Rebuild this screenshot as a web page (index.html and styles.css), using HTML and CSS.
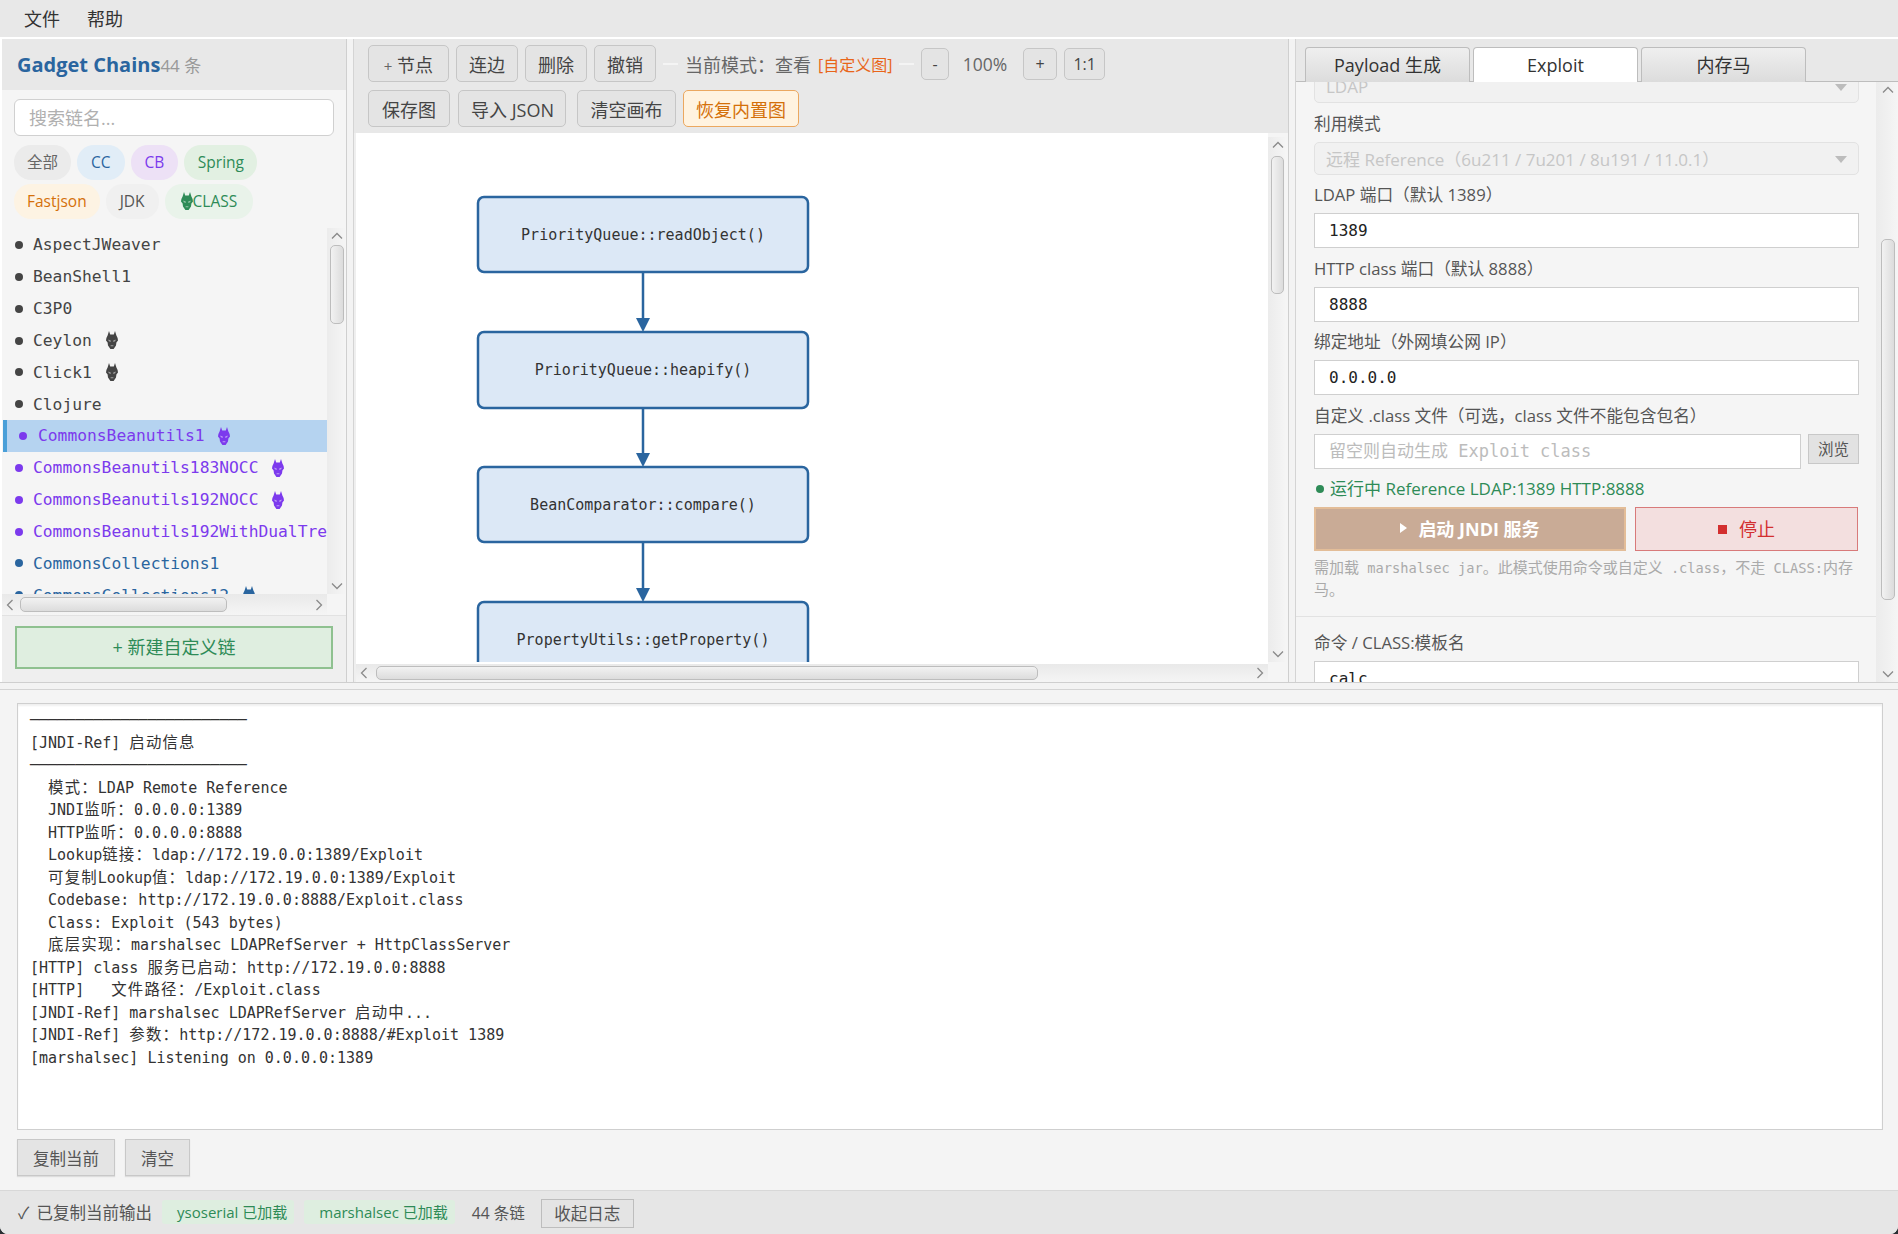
FILE: index.html
```html
<!DOCTYPE html>
<html lang="zh-CN">
<head>
  <meta charset="UTF-8">
  <title>Gadget Chains</title>
  <link rel="stylesheet" href="styles.css">
</head>
<body>
  <svg class="defs" width="0" height="0">
    <symbol id="dragon" viewBox="0 0 12 18">
      <path fill="currentColor" d="M3 0 L4.2 3.6 H7.8 L9 0 L10.4 4.4 L11.6 7 L12 9.5 L10.4 11.6 L10 14.6 L7.6 18 H4.4 L2 14.6 L1.6 11.6 L0 9.5 L0.4 7 L1.6 4.4 Z"/>
      <path fill="#fff" opacity="0.5" d="M2.4 8.4 L5 9.8 L4.4 11 L2.6 10 Z M9.6 8.4 L7 9.8 L7.6 11 L9.4 10 Z M4.6 14.2 H7.4 V15.2 H4.6 Z"/>
    </symbol>
    <symbol id="up" viewBox="0 0 12 8"><path fill="none" stroke="#8a8a8a" stroke-width="1.3" d="M1 6.5 L6 1.5 L11 6.5"/></symbol>
    <symbol id="down" viewBox="0 0 12 8"><path fill="none" stroke="#8a8a8a" stroke-width="1.3" d="M1 1.5 L6 6.5 L11 1.5"/></symbol>
    <symbol id="left" viewBox="0 0 8 12"><path fill="none" stroke="#8a8a8a" stroke-width="1.3" d="M6.5 1 L1.5 6 L6.5 11"/></symbol>
    <symbol id="right" viewBox="0 0 8 12"><path fill="none" stroke="#8a8a8a" stroke-width="1.3" d="M1.5 1 L6.5 6 L1.5 11"/></symbol>
  </svg>

  <div class="app">
    <div class="menubar">
      <span>文件</span>
      <span>帮助</span>
    </div>

    <div class="workspace">
      <!-- 左侧链列表 -->
      <div class="sidebar">
        <div class="side-head">
          <span class="side-title">Gadget Chains</span>
          <span class="side-count">44 条</span>
        </div>
        <div class="side-search">
          <input type="text" placeholder="搜索链名...">
        </div>
        <div class="chips">
          <span class="chip chip-all">全部</span>
          <span class="chip chip-cc">CC</span>
          <span class="chip chip-cb">CB</span>
          <span class="chip chip-spring">Spring</span>
          <span class="chip chip-fastjson">Fastjson</span>
          <span class="chip chip-jdk">JDK</span>
          <span class="chip chip-class"><svg class="dragon"><use href="#dragon"/></svg>CLASS</span>
        </div>
        <div class="chain-box">
          <div class="chain-body">
            <div class="chain-list">
              <div class="chain">AspectJWeaver</div>
              <div class="chain">BeanShell1</div>
              <div class="chain">C3P0</div>
              <div class="chain">Ceylon <svg class="dragon"><use href="#dragon"/></svg></div>
              <div class="chain">Click1 <svg class="dragon"><use href="#dragon"/></svg></div>
              <div class="chain">Clojure</div>
              <div class="chain chain-cb selected">CommonsBeanutils1 <svg class="dragon"><use href="#dragon"/></svg></div>
              <div class="chain chain-cb">CommonsBeanutils183NOCC <svg class="dragon"><use href="#dragon"/></svg></div>
              <div class="chain chain-cb">CommonsBeanutils192NOCC <svg class="dragon"><use href="#dragon"/></svg></div>
              <div class="chain chain-cb">CommonsBeanutils192WithDualTreeBidiMap</div>
              <div class="chain chain-cc">CommonsCollections1</div>
              <div class="chain chain-cc">CommonsCollections12 <svg class="dragon"><use href="#dragon"/></svg></div>
            </div>
            <div class="hscroll hscroll-list">
              <svg class="arrow-h"><use href="#left"/></svg>
              <div class="track-h"><div class="thumb-h thumb-list-h"></div></div>
              <svg class="arrow-h"><use href="#right"/></svg>
            </div>
          </div>
          <div class="vscroll vscroll-list">
            <svg class="arrow-v"><use href="#up"/></svg>
            <div class="track-v"><div class="thumb-v thumb-list-v"></div></div>
            <svg class="arrow-v"><use href="#down"/></svg>
          </div>
        </div>
        <div class="side-foot">
          <button class="btn-new">+ 新建自定义链</button>
        </div>
      </div>

      <div class="split-v"></div>

      <!-- 中间画布 -->
      <div class="center">
        <div class="toolbar">
          <div class="tool-row">
            <button class="btn btn-node"><span class="plus">+</span> 节点</button>
            <button class="btn">连边</button>
            <button class="btn">删除</button>
            <button class="btn">撤销</button>
            <span class="sep"></span>
            <span class="mode">当前模式：查看</span>
            <span class="mode-name">[自定义图]</span>
            <span class="sep"></span>
            <button class="btn btn-zoom">-</button>
            <span class="zoom-val">100%</span>
            <button class="btn btn-zoom btn-plus">+</button>
            <button class="btn btn-zoom btn-fit">1:1</button>
          </div>
          <div class="tool-row">
            <button class="btn btn-save">保存图</button>
            <button class="btn btn-import">导入 JSON</button>
            <button class="btn btn-clear">清空画布</button>
            <button class="btn btn-restore">恢复内置图</button>
          </div>
        </div>
        <div class="canvas-box">
          <div class="canvas-body">
            <div class="canvas">
              <svg class="graph" width="912" height="529" viewBox="2 0 912 529">
                <g class="node">
                  <rect x="124" y="64" width="330" height="75" rx="6"/>
                  <text x="289" y="107">PriorityQueue::readObject()</text>
                </g>
                <path class="edge" d="M289 139 V186"/>
                <path class="head" d="M282 185 H296 L289 199 Z"/>
                <g class="node">
                  <rect x="124" y="199" width="330" height="76" rx="6"/>
                  <text x="289" y="242">PriorityQueue::heapify()</text>
                </g>
                <path class="edge" d="M289 275 V321"/>
                <path class="head" d="M282 320 H296 L289 334 Z"/>
                <g class="node">
                  <rect x="124" y="334" width="330" height="75" rx="6"/>
                  <text x="289" y="377">BeanComparator::compare()</text>
                </g>
                <path class="edge" d="M289 409 V456"/>
                <path class="head" d="M282 455 H296 L289 469 Z"/>
                <g class="node">
                  <rect x="124" y="469" width="330" height="75" rx="6"/>
                  <text x="289" y="512">PropertyUtils::getProperty()</text>
                </g>
              </svg>
            </div>
            <div class="hscroll hscroll-canvas">
              <svg class="arrow-h"><use href="#left"/></svg>
              <div class="track-h"><div class="thumb-h thumb-canvas-h"></div></div>
              <svg class="arrow-h"><use href="#right"/></svg>
            </div>
          </div>
          <div class="canvas-side">
            <div class="vscroll vscroll-canvas">
              <svg class="arrow-v"><use href="#up"/></svg>
              <div class="track-v"><div class="thumb-v thumb-canvas-v"></div></div>
              <svg class="arrow-v"><use href="#down"/></svg>
            </div>
          </div>
        </div>
      </div>

      <div class="split-v"></div>

      <!-- 右侧配置 -->
      <div class="config">
        <div class="tabs">
          <div class="tab">Payload 生成</div>
          <div class="tab active">Exploit</div>
          <div class="tab">内存马</div>
        </div>
        <div class="config-box">
          <div class="form">
            <div class="select select-first">LDAP<span class="caret"></span></div>
            <label class="field-label">利用模式</label>
            <div class="select">远程 Reference（6u211 / 7u201 / 8u191 / 11.0.1）<span class="caret"></span></div>
            <label class="field-label">LDAP 端口（默认 1389）</label>
            <input class="field" type="text" value="1389">
            <label class="field-label">HTTP class 端口（默认 8888）</label>
            <input class="field" type="text" value="8888">
            <label class="field-label">绑定地址（外网填公网 IP）</label>
            <input class="field" type="text" value="0.0.0.0">
            <label class="field-label">自定义 .class 文件（可选，class 文件不能包含包名）</label>
            <div class="file-row">
              <input class="field" type="text" placeholder="留空则自动生成 Exploit class">
              <button class="btn-browse">浏览</button>
            </div>
            <div class="run-state"><span class="run-dot"></span>运行中 Reference LDAP:1389 HTTP:8888</div>
            <div class="run-row">
              <button class="btn-start"><span class="tri"></span>启动 JNDI 服务</button>
              <button class="btn-stop"><span class="square"></span>停止</button>
            </div>
            <div class="hint">
              <div class="hint-line"><span class="zh">需加载</span> marshalsec jar<span class="zh">。此模式使用命令或自定义</span> .class<span class="zh">，不走</span> CLASS:<span class="zh">内存</span></div>
              <div class="hint-line"><span class="zh">马。</span></div>
            </div>
            <div class="form-line"></div>
            <label class="field-label">命令 / CLASS:模板名</label>
            <input class="field" type="text" value="calc">
          </div>
          <div class="vscroll vscroll-config">
            <svg class="arrow-v"><use href="#up"/></svg>
            <div class="track-v"><div class="thumb-v thumb-config-v"></div></div>
            <svg class="arrow-v"><use href="#down"/></svg>
          </div>
        </div>
      </div>
    </div>

    <div class="split-h"></div>

    <!-- 日志 -->
    <div class="log-panel">
      <div class="log">
        <div class="log-line">────────────────────────</div>
        <div class="log-line">[JNDI-Ref] <span class="zh">启动信息</span></div>
        <div class="log-line">────────────────────────</div>
        <div class="log-line">  <span class="zh">模式：</span>LDAP Remote Reference</div>
        <div class="log-line">  JNDI<span class="zh">监听：</span>0.0.0.0:1389</div>
        <div class="log-line">  HTTP<span class="zh">监听：</span>0.0.0.0:8888</div>
        <div class="log-line">  Lookup<span class="zh">链接：</span>ldap://172.19.0.0:1389/Exploit</div>
        <div class="log-line">  <span class="zh">可复制</span>Lookup<span class="zh">值：</span>ldap://172.19.0.0:1389/Exploit</div>
        <div class="log-line">  Codebase: http://172.19.0.0:8888/Exploit.class</div>
        <div class="log-line">  Class: Exploit (543 bytes)</div>
        <div class="log-line">  <span class="zh">底层实现：</span>marshalsec LDAPRefServer + HttpClassServer</div>
        <div class="log-line">[HTTP] class <span class="zh">服务已启动：</span>http://172.19.0.0:8888</div>
        <div class="log-line">[HTTP]   <span class="zh">文件路径：</span>/Exploit.class</div>
        <div class="log-line">[JNDI-Ref] marshalsec LDAPRefServer <span class="zh">启动中</span>...</div>
        <div class="log-line">[JNDI-Ref] <span class="zh">参数：</span>http://172.19.0.0:8888/#Exploit 1389</div>
        <div class="log-line">[marshalsec] Listening on 0.0.0.0:1389</div>
      </div>
      <div class="log-actions">
        <button class="btn-log">复制当前</button>
        <button class="btn-log">清空</button>
      </div>
    </div>

    <div class="statusbar">
      <span class="status-msg">✓ 已复制当前输出</span>
      <span class="status-chip">ysoserial 已加载</span>
      <span class="status-chip">marshalsec 已加载</span>
      <span class="status-count">44 条链</span>
      <button class="btn-collapse">收起日志</button>
    </div>
  </div>
</body>
</html>
```

FILE: styles.css
```css
* {
  margin: 0;
  padding: 0;
  box-sizing: border-box;
}

html, body {
  height: 100%;
  overflow: hidden;
}

body {
  background-color: #2a2f33;
  color: #444;
  font-family: "Open Sans", "Noto Sans CJK SC", sans-serif;
  font-size: 18px;
}

button, input {
  font-family: inherit;
}

.defs {
  position: absolute;
}

.app {
  height: 100vh;
  display: flex;
  flex-direction: column;
  background-color: #fff;
  border-radius: 0 0 8px 8px;
  overflow: hidden;
}

.menubar {
  height: 37px;
  margin-bottom: 2px;
  flex: none;
  background-color: #e8e8e8;
  display: flex;
  align-items: center;
  gap: 27px;
  padding: 0 0 2px 24px;
  font-size: 18px;
  color: #333;
}

.workspace {
  height: 643px;
  flex: none;
  display: flex;
  padding-left: 2px;
}

.split-v {
  width: 8px;
  flex: none;
  background-color: #f3f3f3;
  border-left: 1px solid #cfcfcf;
  border-right: 1px solid #d4d4d4;
}

/* sidebar */
.sidebar {
  width: 344px;
  flex: none;
  display: flex;
  flex-direction: column;
  background-color: #f5f5f5;
}

.side-head {
  height: 51px;
  flex: none;
  background-color: #e8e8e8;
  display: flex;
  align-items: center;
  padding-left: 15px;
}

.side-title {
  font-size: 20px;
  font-weight: 700;
  color: #2a659f;
}

.side-count {
  font-size: 17px;
  color: #999;
}

.side-search {
  padding: 9px 12px 9px;
}

.side-search input {
  width: 320px;
  height: 37px;
  border: 1.5px solid #d0d0d0;
  border-radius: 6px;
  padding-left: 14px;
  font-size: 18px;
  background-color: #fff;
  outline: none;
}

.side-search input::placeholder {
  color: #b0b0b0;
}

.chips {
  display: flex;
  flex-wrap: wrap;
  gap: 4px 6px;
  padding: 0 12px;
  width: 314px;
}

.chip {
  height: 35px;
  border-radius: 17px;
  padding: 0 13px 2px;
  font-size: 15.5px;
  display: flex;
  align-items: center;
}

.chip-all { background-color: #ebebeb; color: #666; }
.chip-cc { background-color: #e1edf7; color: #2a659f; padding: 0 14px 2px; }
.chip-cb { background-color: #ede1f6; color: #7c3aed; padding: 0 14px 2px; }
.chip-spring { background-color: #e2f0e2; color: #2e8b57; padding: 0 13.5px 2px; }
.chip-fastjson { background-color: #fdf3e3; color: #d4700a; }
.chip-jdk { background-color: #f0f0f0; color: #555; padding: 0 14px 2px; }
.chip-class { background-color: #e9f3ea; color: #2e8b57; padding: 0 16px 2px; }

.chain-box {
  margin-top: 9px;
  height: 387px;
  flex: none;
  display: flex;
}

.chain-body {
  flex: 1;
  min-width: 0;
  display: flex;
  flex-direction: column;
}

.chain-list {
  height: 366px;
  overflow: hidden;
  padding-top: 1px;
}

.chain {
  height: 31.85px;
  position: relative;
  padding-left: 31px;
  display: flex;
  align-items: center;
  gap: 4px;
  white-space: pre;
  font-family: "DejaVu Sans Mono", "Noto Sans CJK SC", monospace;
  font-size: 16.3px;
  color: #444;
}

.chain::before {
  content: "";
  position: absolute;
  left: 13px;
  top: 12px;
  width: 8px;
  height: 8px;
  border-radius: 50%;
  background-color: currentColor;
}

.chain-cb { color: #7c3aed; }
.chain-cc { color: #2a659f; }

.chain.selected {
  background-color: #b5d3f0;
  border-left: 4px solid #4a9fd8;
  margin-left: 1px;
  padding-left: 31px;
}

.chain.selected::before {
  left: 12px;
}

.dragon {
  width: 12px;
  height: 18px;
  flex: none;
  vertical-align: -3px;
}

.side-foot {
  flex: 1;
  background-color: #efefef;
  padding: 10px 13px 0;
  border-top: 1px solid #e2e2e2;
}

.btn-new {
  width: 318px;
  height: 43px;
  padding-bottom: 3px;
  background-color: #dfeee0;
  border: 2px solid #8fc190;
  color: #2e8b57;
  font-size: 18px;
}

/* scrollbars */
.vscroll {
  flex: none;
  display: flex;
  flex-direction: column;
  align-items: center;
  background: linear-gradient(to right, #ececec, #f5f5f5);
  border-left: 1px solid #ececec;
}

.track-v {
  flex: 1;
  width: 100%;
  display: flex;
  justify-content: center;
}

.track-h {
  flex: 1;
  height: 100%;
}

.arrow-v {
  width: 12px;
  height: 8px;
  flex: none;
  margin: 4px 0;
}

.arrow-h {
  width: 8px;
  height: 12px;
  flex: none;
}

.hscroll {
  flex: none;
  display: flex;
  align-items: center;
  gap: 4px;
  padding: 0 4px;
  background: linear-gradient(to bottom, #e9e9e9, #f5f5f5);
}

.thumb-v {
  width: 14px;
  border: 1.5px solid #bdbdbd;
  border-radius: 5px;
  background: linear-gradient(to right, #f2f2f2, #dcdcdc);
}

.thumb-h {
  height: 15px;
  border: 1.5px solid #bdbdbd;
  border-radius: 5px;
  background: linear-gradient(to bottom, #f2f2f2, #dcdcdc);
}

.vscroll-list {
  width: 19px;
  height: 366px;
}

.hscroll-list {
  height: 21px;
}

.thumb-list-v {
  height: 79px;
  margin-top: 1px;
}

.thumb-list-h {
  width: 207px;
  margin: 3px 0 0 2px;
}

/* center */
.center {
  width: 934px;
  flex: none;
  display: flex;
  flex-direction: column;
  background-color: #fff;
}

.toolbar {
  height: 94px;
  flex: none;
  background-color: #e8e8e8;
  padding-top: 6px;
  display: flex;
  flex-direction: column;
  gap: 8px;
}

.tool-row {
  display: flex;
  align-items: center;
  gap: 7px;
  padding-left: 14px;
  height: 37px;
}

.btn {
  height: 37px;
  padding: 0 12px;
  border: 1.5px solid #c6c6c6;
  border-radius: 5px;
  background-color: #e4e4e4;
  color: #444;
  font-size: 18px;
  white-space: nowrap;
}

.plus {
  color: #666;
  font-size: 15px;
}

.btn-node {
  width: 81px;
}

.btn-save {
  width: 82px;
}

.btn-import {
  width: 108px;
  margin-left: 1px;
}

.btn-clear {
  width: 99px;
  margin-left: 4px;
}

.btn-zoom {
  height: 32px;
  font-size: 16px;
  padding: 0 10px;
}

.btn-plus {
  width: 34px;
  margin-left: 9px;
}

.btn-fit {
  width: 41px;
  padding: 0;
}

.btn-restore {
  width: 116px;
  padding: 0;
  background-color: #fff3e0;
  border-color: #eba860;
  color: #d4700a;
}

.sep {
  width: 15px;
  height: 2px;
  background-color: #f4f4f4;
}

.mode {
  color: #666;
  font-size: 18px;
}

.mode-name {
  color: #e8651a;
  font-size: 16px;
}

.zoom-val {
  color: #666;
  font-size: 17.5px;
  margin-left: 7px;
}

.canvas-box {
  flex: 1;
  min-height: 0;
  display: flex;
}

.canvas-body {
  flex: 1;
  min-width: 0;
  display: flex;
  flex-direction: column;
  border-left: 2px solid #efefef;
}

.canvas {
  flex: 1;
  min-height: 0;
  overflow: hidden;
}

.graph {
  display: block;
}

.node rect {
  fill: #dce8f6;
  stroke: #2a659f;
  stroke-width: 2.5;
}

.node text {
  font-family: "DejaVu Sans Mono", monospace;
  font-size: 15px;
  fill: #333;
  text-anchor: middle;
}

.edge {
  stroke: #2a659f;
  stroke-width: 2.5;
  fill: none;
}

.head {
  fill: #2a659f;
}

.hscroll-canvas {
  height: 18px;
  padding: 0 4px 0 4px;
}

.thumb-canvas-h {
  width: 662px;
  height: 14px;
  margin: 2px 0 0 4px;
}

.canvas-side {
  width: 20px;
  flex: none;
  background-color: #f5f5f5;
  padding: 4px 2px 20px 0;
  display: flex;
}

.vscroll-canvas {
  width: 18px;
}

.thumb-canvas-v {
  width: 13px;
  height: 138px;
  margin-top: 3px;
}

/* config */
.config {
  flex: 1;
  min-width: 0;
  display: flex;
  flex-direction: column;
  background-color: #f5f5f5;
}

.tabs {
  height: 43px;
  flex: none;
  display: flex;
  gap: 3px;
  background-color: #e8e8e8;
  padding: 8px 0 0 9px;
  border-bottom: 1px solid #bdbdbd;
}

.tab {
  width: 165px;
  height: 35px;
  border: 1px solid #bdbdbd;
  border-bottom: none;
  border-radius: 4px 4px 0 0;
  background: linear-gradient(to bottom, #efefef, #dcdcdc);
  display: flex;
  align-items: center;
  justify-content: center;
  padding-bottom: 2px;
  font-size: 18px;
  color: #333;
}

.tab.active {
  background: #fff;
  height: 36px;
}

.config-box {
  flex: 1;
  min-height: 0;
  display: flex;
}

.form {
  flex: 1;
  min-width: 0;
  overflow: hidden;
  padding: 0 17px 0 18px;
  display: flex;
  flex-direction: column;
  align-items: stretch;
}

.select {
  height: 33px;
  flex: none;
  position: relative;
  background-color: #f1f1f1;
  border: 1.5px solid #e2e2e2;
  border-radius: 5px;
  color: #c6c6c6;
  font-size: 17px;
  padding-left: 11px;
  display: flex;
  align-items: center;
}

.select-first {
  margin-top: -12px;
}

.caret {
  position: absolute;
  right: 11px;
  top: 13px;
  width: 0;
  height: 0;
  border-left: 6px solid transparent;
  border-right: 6px solid transparent;
  border-top: 7px solid #bcbcbc;
}

.field-label {
  height: 38.5px;
  flex: none;
  display: flex;
  align-items: center;
  padding-top: 1px;
  font-size: 16.7px;
  color: #555;
}

.field {
  height: 35px;
  flex: none;
  width: 100%;
  border: 1.5px solid #cfcfcf;
  background-color: #fff;
  padding-left: 14px;
  font-family: "DejaVu Sans Mono", "Noto Sans CJK SC", monospace;
  font-size: 16px;
  color: #222;
  outline: none;
}

.field::placeholder {
  color: #bcbcbc;
  font-size: 17px;
}

.file-row {
  display: flex;
  gap: 7px;
  align-items: flex-start;
  flex: none;
}

.file-row .field {
  flex: 1;
  width: auto;
  min-width: 0;
}

.btn-browse {
  width: 51px;
  height: 30px;
  flex: none;
  background-color: #e2e2e2;
  border: 1.5px solid #c8c8c8;
  color: #555;
  font-size: 15.5px;
}

.run-state {
  height: 38.5px;
  flex: none;
  display: flex;
  align-items: center;
  font-size: 17px;
  color: #2e8b57;
}

.run-dot {
  width: 8px;
  height: 8px;
  border-radius: 50%;
  background-color: #2e8b57;
  margin: 2px 6px 0 2px;
}

.run-row {
  display: flex;
  gap: 9px;
  flex: none;
}

.btn-start {
  width: 312px;
  height: 44px;
  padding-bottom: 3px;
  background-color: #c9ab96;
  border: 2px solid #e3bd98;
  color: #fff;
  font-size: 18px;
  font-weight: 700;
  display: flex;
  align-items: center;
  justify-content: center;
}

.tri {
  width: 0;
  height: 0;
  border-top: 5px solid transparent;
  border-bottom: 5px solid transparent;
  border-left: 7px solid #fff;
  margin-right: 11px;
}

.btn-stop {
  width: 223px;
  height: 44px;
  padding-bottom: 3px;
  background-color: #f3dfdf;
  border: 1.5px solid #d87a7a;
  color: #d32f2f;
  font-size: 18px;
  display: flex;
  align-items: center;
  justify-content: center;
}

.square {
  width: 9px;
  height: 9px;
  background-color: #d32f2f;
  margin: 3px 12px 0 0;
}

.hint {
  flex: none;
  margin-top: 6px;
  font-family: "DejaVu Sans Mono", "Noto Sans CJK SC", monospace;
  font-size: 13.7px;
  color: #aaa;
}

.hint-line {
  height: 22px;
  line-height: 22px;
  white-space: pre;
}

.hint .zh {
  font-size: 15px;
  line-height: 1;
}

.form-line {
  height: 1px;
  flex: none;
  background-color: #e2e2e2;
  margin: 15px -17px 5px -18px;
}

.vscroll-config {
  width: 22px;
}

.thumb-config-v {
  width: 14px;
  height: 361px;
  margin-top: 141px;
}

/* log */
.split-h {
  height: 8px;
  flex: none;
  background-color: #f3f3f3;
  border-top: 1px solid #cfcfcf;
  border-bottom: 1px solid #d4d4d4;
}

.log-panel {
  flex: 1;
  min-height: 0;
  background-color: #f4f4f4;
  padding: 13px 15px 0 17px;
  display: flex;
  flex-direction: column;
}

.log {
  height: 427px;
  flex: none;
  background-color: #fff;
  border: 1.5px solid #cfcfcf;
  box-shadow: inset 0 2px 2px #f0f0f0;
  padding: 5px 12px 0;
  font-family: "DejaVu Sans Mono", "Noto Sans CJK SC", monospace;
  font-size: 15px;
  color: #333;
  overflow: hidden;
}

.log-line {
  height: 22.5px;
  line-height: 22.5px;
  white-space: pre;
}

.log .zh {
  font-size: 15.4px;
  letter-spacing: 1.2px;
  line-height: 1;
}

.log-actions {
  display: flex;
  gap: 10px;
  margin-top: 9px;
}

.btn-log {
  height: 37px;
  padding: 0 15px;
  background-color: #e4e4e4;
  border: 1.5px solid #c8c8c8;
  box-shadow: 0 1px 1px #ddd;
  color: #555;
  font-size: 16.5px;
}

.statusbar {
  height: 44px;
  flex: none;
  background-color: #e6e6e6;
  border-top: 1px solid #d8d8d8;
  display: flex;
  align-items: center;
  padding: 0 0 1px 18px;
  font-size: 16px;
  color: #555;
}

.status-chip {
  height: 24px;
  display: flex;
  align-items: center;
  padding: 0 7px 1px 15px;
  background-color: #deeee0;
  color: #2e8b57;
  border-radius: 3px;
  margin-left: 10px;
  font-size: 15px;
}

.status-msg {
  font-size: 16.5px;
  word-spacing: 3px;
}

.status-count {
  margin-left: 17px;
  font-size: 15.6px;
}

.btn-collapse {
  height: 29px;
  width: 93px;
  margin: 2px 0 0 16px;
  background-color: #e4e4e4;
  border: 1.5px solid #bdbdbd;
  color: #555;
  font-size: 16.5px;
}
```
